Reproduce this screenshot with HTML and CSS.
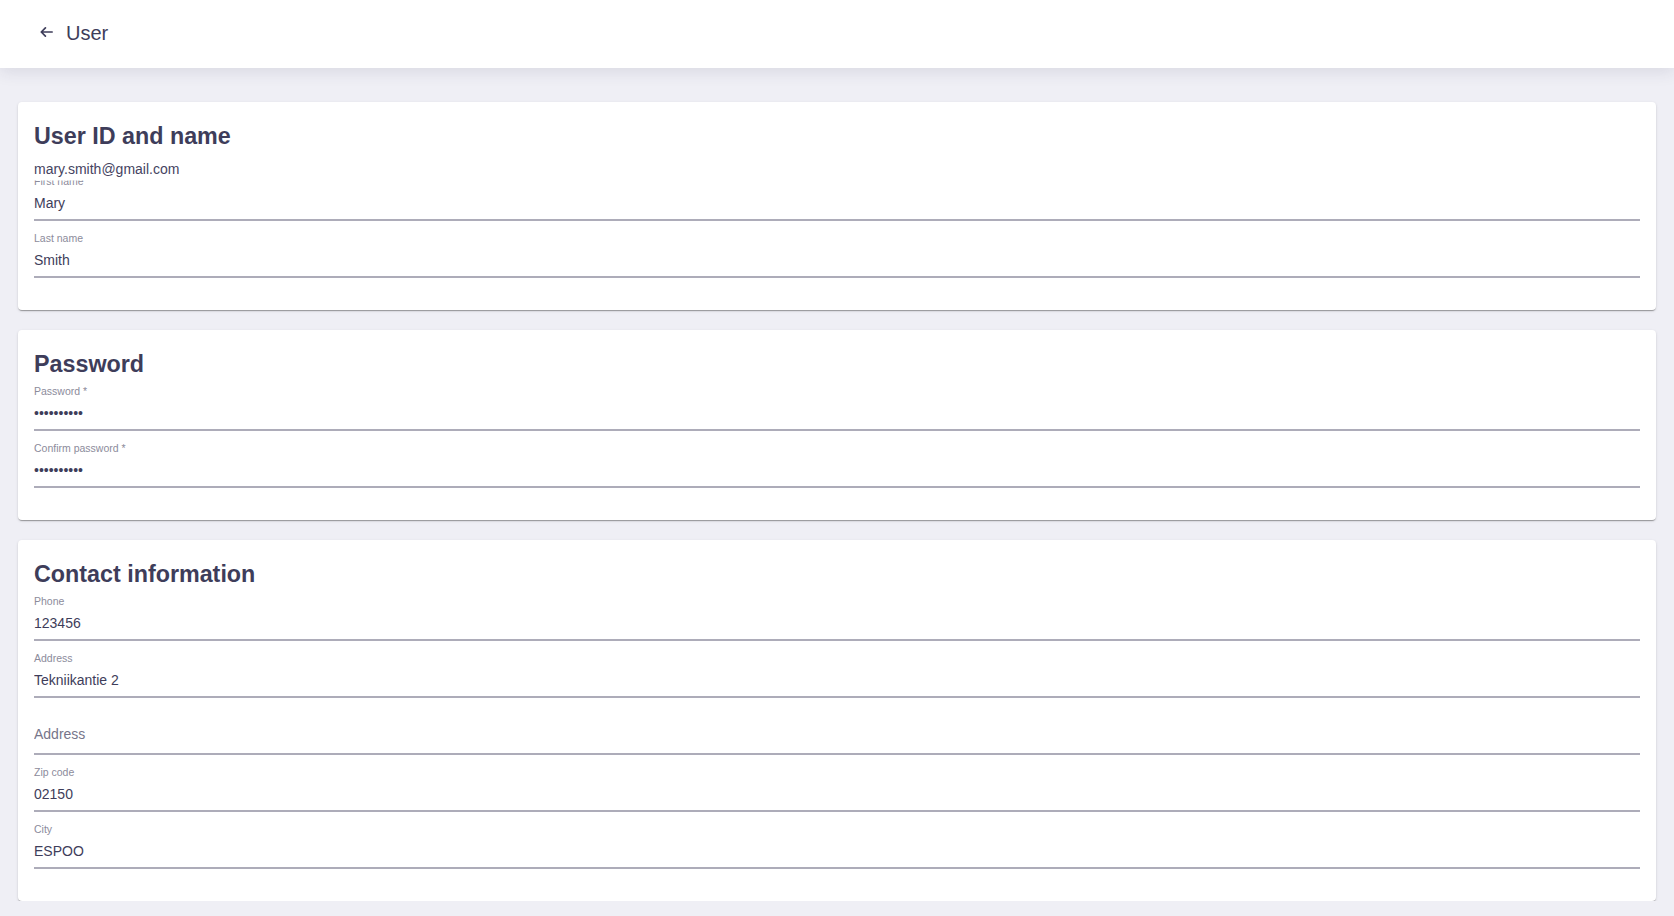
FILE: index.html
```html
<!DOCTYPE html>
<html lang="en">
<head>
<meta charset="utf-8">
<title>User</title>
<link rel="stylesheet" href="styles.css">
</head>
<body>
<header class="topbar">
  <button class="back" type="button" aria-label="Back">
    <svg width="13" height="10" viewBox="0 0 13 10" aria-hidden="true">
      <path d="M12.2 5H1.4M5.4 0.9L1.3 5l4.1 4.1" fill="none" stroke="#3e3d5a" stroke-width="1.7" stroke-linecap="round" stroke-linejoin="round"/>
    </svg>
  </button>
  <h1 class="topbar-title">User</h1>
</header>

<main class="page">
  <section class="card">
    <h2 class="card-title">User ID and name</h2>
    <div class="user-id">mary.smith@gmail.com</div>
    <label class="field field--tucked">
      <span class="field-label">First name</span>
      <input class="field-input" type="text" value="Mary">
    </label>
    <label class="field">
      <span class="field-label">Last name</span>
      <input class="field-input" type="text" value="Smith">
    </label>
  </section>

  <section class="card">
    <h2 class="card-title">Password</h2>
    <label class="field">
      <span class="field-label">Password *</span>
      <input class="field-input" type="password" value="**********">
    </label>
    <label class="field">
      <span class="field-label">Confirm password *</span>
      <input class="field-input" type="password" value="**********">
    </label>
  </section>

  <section class="card">
    <h2 class="card-title">Contact information</h2>
    <label class="field">
      <span class="field-label">Phone</span>
      <input class="field-input" type="text" value="123456">
    </label>
    <label class="field">
      <span class="field-label">Address</span>
      <input class="field-input" type="text" value="Tekniikantie 2">
    </label>
    <label class="field field--empty">
      <input class="field-input" type="text" placeholder="Address">
    </label>
    <label class="field">
      <span class="field-label">Zip code</span>
      <input class="field-input" type="text" value="02150">
    </label>
    <label class="field">
      <span class="field-label">City</span>
      <input class="field-input" type="text" value="ESPOO">
    </label>
  </section>
</main>
</body>
</html>
```

FILE: styles.css
```css
* { box-sizing: border-box; }

html, body {
  margin: 0;
  padding: 0;
}

body {
  background: #efeff5;
  font-family: "Liberation Sans", Arial, sans-serif;
  color: #3e3d5a;
}

.topbar {
  height: 68px;
  background: #ffffff;
  display: flex;
  align-items: flex-start;
  padding: 21px 0 0 40px;
  box-shadow: 0 3px 16px rgba(40, 40, 80, 0.12);
  position: relative;
  z-index: 1;
}

.back {
  border: 0;
  background: none;
  padding: 0;
  margin: 5.5px 13px 0 0;
  width: 13px;
  height: 10px;
  display: flex;
  cursor: pointer;
}

.topbar-title {
  margin: 0;
  font-size: 20px;
  line-height: 24px;
  font-weight: 400;
  color: #3e3d5a;
}

.page {
  padding: 34px 18px 0;
  display: flex;
  flex-direction: column;
  gap: 20px;
}

.card {
  background: #ffffff;
  border-radius: 4px;
  padding: 20px 16px 32px;
  display: flex;
  flex-direction: column;
  gap: 11px;
  box-shadow: 0 2px 1px -1px rgba(0, 0, 0, 0.20),
              0 1px 1px 0 rgba(0, 0, 0, 0.14),
              0 1px 3px 0 rgba(0, 0, 0, 0.12);
}

.card-title {
  margin: 0 0 -4px;
  font-size: 23.3px;
  line-height: 28px;
  font-weight: 700;
  color: #3e3d5a;
}

.user-id {
  font-size: 14px;
  line-height: 17px;
  margin-top: 4px;
  color: #45445f;
}

.field {
  display: flex;
  flex-direction: column;
  border-bottom: 2px solid #adacb9;
}

.field--tucked {
  margin-top: -14px;
}

.field--tucked .field-label {
  clip-path: inset(5.5px 0 0 0);
}

.field-label {
  font-size: 10.5px;
  line-height: 13px;
  height: 13px;
  color: #8c8b9b;
}

.field-input {
  font-family: "Liberation Sans", Arial, sans-serif;
  font-size: 14px;
  line-height: 17px;
  height: 31px;
  padding: 6px 0 8px;
  margin: 0;
  border: 0;
  outline: none;
  background: transparent;
  color: #3e3d5a;
  width: 100%;
}

.field--empty .field-input {
  height: 44px;
  padding: 16.5px 0 10.5px;
}

.field-input::placeholder {
  color: #76758a;
  opacity: 1;
}
```
